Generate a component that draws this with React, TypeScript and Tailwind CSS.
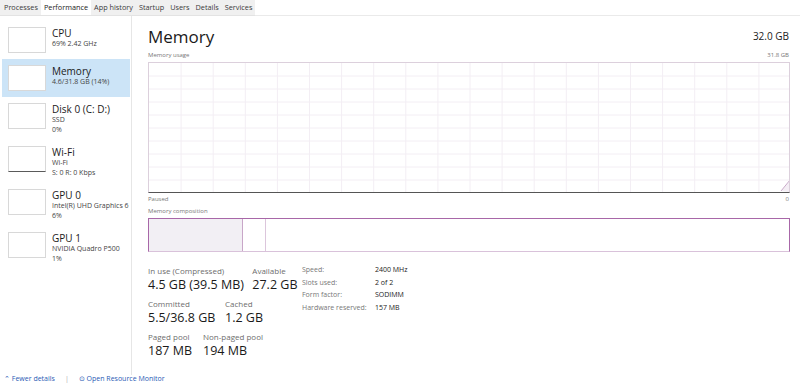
const tabs = ["Processes", "Performance", "App history", "Startup", "Users", "Details", "Services"];

const devices: { title: string; lines: string[]; active?: boolean; line?: boolean }[] = [
  { title: "CPU", lines: ["69%  2.42 GHz"] },
  { title: "Memory", lines: ["4.6/31.8 GB (14%)"], active: true },
  { title: "Disk 0 (C: D:)", lines: ["SSD", "0%"] },
  { title: "Wi-Fi", lines: ["Wi-Fi", "S: 0  R: 0 Kbps"], line: true },
  { title: "GPU 0", lines: ["Intel(R) UHD Graphics 6", "6%"] },
  { title: "GPU 1", lines: ["NVIDIA Quadro P500", "1%"] },
];

const hardware = [
  ["Speed:", "2400 MHz"],
  ["Slots used:", "2 of 2"],
  ["Form factor:", "SODIMM"],
  ["Hardware reserved:", "157 MB"],
];

function Stat({ label, value, w }: { label: string; value: string; w: string }) {
  return (
    <div className={`flex flex-col ${w}`}>
      <span className="text-[8px] leading-[11px] text-[#6d6d6d] whitespace-nowrap">{label}</span>
      <span className="text-[12.5px] leading-[17px] text-[#1a1a1a] whitespace-nowrap">{value}</span>
    </div>
  );
}

function UsageGrid() {
  const cols = Array.from({ length: 19 }, (_, i) => (i + 1) * 32.1);
  const rows = Array.from({ length: 9 }, (_, i) => (i + 1) * 13);
  return (
    <svg width="642" height="130" className="block">
      {cols.map((x) => (
        <line key={x} x1={x} y1={0} x2={x} y2={130} stroke="#f3eef4" strokeWidth="1" />
      ))}
      {rows.map((y) => (
        <line key={y} x1={0} y1={y} x2={642} y2={y} stroke="#f3eef4" strokeWidth="1" />
      ))}
      <path d="M632 128 L641 118 L641 129 Z" fill="#f4eef5" />
      <line x1={632} y1={128} x2={641} y2={117} stroke="#c9a9c8" strokeWidth="1" />
    </svg>
  );
}

export default function App() {
  return (
    <div
      className="w-[800px] h-[384px] overflow-hidden bg-white flex flex-col text-[#1a1a1a]"
      style={{ fontFamily: '"Open Sans", "Noto Sans", sans-serif' }}
    >
      <div className="h-[16px] flex shrink-0">
        <div className="flex bg-[#f0f0f0] border-b border-[#e3e3e3] pl-[1px]">
          {tabs.map((t) => (
            <span
              key={t}
              className={`px-[3px] text-[7.3px] leading-[15px] ${
                t === "Performance" ? "bg-white text-[#1a1a1a]" : "text-[#3a3a3a]"
              }`}
            >
              {t}
            </span>
          ))}
        </div>
        <div className="flex-1 border-b border-[#eaeaea]" />
      </div>

      <div className="flex flex-1 min-h-0">
        <div className="w-[132px] shrink-0 border-r border-[#e6e6e6] pt-[5px] pl-[2px] pr-[1px] flex flex-col">
          {devices.map((d) => (
            <div
              key={d.title}
              className={`flex items-start gap-[6px] py-[6px] ${d.active ? "bg-[#cce4f7]" : ""}`}
            >
              <div
                className={`ml-[6px] w-[38px] h-[26px] shrink-0 bg-white border border-[#d8d8d8] ${
                  d.line ? "border-b-[#5a5a5a]" : ""
                }`}
              />
              <div className="flex flex-col min-w-0">
                <span className="text-[10px] leading-[12px] whitespace-nowrap">{d.title}</span>
                {d.lines.map((l) => (
                  <span key={l} className="text-[7px] leading-[9.5px] text-[#444] whitespace-nowrap">
                    {l}
                  </span>
                ))}
              </div>
            </div>
          ))}
        </div>

        <div className="flex-1 pl-[16px] pr-[10px] pt-[8px] flex flex-col">
          <div className="flex items-end justify-between h-[25px]">
            <span className="text-[17px] leading-[24px]">Memory</span>
            <span className="text-[10px] leading-[14px] mb-[6px] mr-[1px]">32.0 GB</span>
          </div>
          <div className="flex justify-between text-[6px] leading-[10px] text-[#777] mt-[1px]">
            <span>Memory usage</span>
            <span className="mr-[1px]">31.8 GB</span>
          </div>
          <div className="w-[642px] h-[131px] border border-[#dcd0dc] border-b-[#555] mt-[2px] overflow-hidden">
            <UsageGrid />
          </div>
          <div className="flex justify-between text-[6px] leading-[10px] text-[#777] mt-[1px]">
            <span>Paused</span>
            <span className="mr-[1px]">0</span>
          </div>
          <span className="text-[6px] leading-[10px] text-[#777] mt-[2px]">Memory composition</span>
          <div className="w-[642px] h-[34px] border border-[#a867a8] border-b-[#d9c2da] mt-[2px] flex">
            <div className="w-[94px] bg-[#f2eff4] border-r border-[#c8a6c8]" />
            <div className="w-[23px] border-r border-[#dcc6dc]" />
            <div className="flex-1" />
          </div>

          <div className="flex mt-[13px]">
            <div className="flex flex-col w-[154px] gap-[5px]">
              <div className="flex">
                <Stat label="In use (Compressed)" value="4.5 GB (39.5 MB)" w="w-[105px]" />
                <Stat label="Available" value="27.2 GB" w="w-[50px]" />
              </div>
              <div className="flex">
                <Stat label="Committed" value="5.5/36.8 GB" w="w-[77px]" />
                <Stat label="Cached" value="1.2 GB" w="w-[50px]" />
              </div>
              <div className="flex">
                <Stat label="Paged pool" value="187 MB" w="w-[55px]" />
                <Stat label="Non-paged pool" value="194 MB" w="w-[70px]" />
              </div>
            </div>
            <div className="flex flex-col -mt-[1px]">
              {hardware.map(([k, v]) => (
                <div key={k} className="flex text-[7px] leading-[12.5px]">
                  <span className="w-[73px] text-[#777]">{k}</span>
                  <span className="text-[#222]">{v}</span>
                </div>
              ))}
            </div>
          </div>
        </div>
      </div>

      <div className="h-[9px] shrink-0 flex items-start pl-[4px] gap-[10px] text-[7px] leading-[8px] text-[#2a5bb5]">
        <span>⌃ Fewer details</span>
        <span className="text-[#aaa]">|</span>
        <span>⊙ Open Resource Monitor</span>
      </div>
    </div>
  );
}
